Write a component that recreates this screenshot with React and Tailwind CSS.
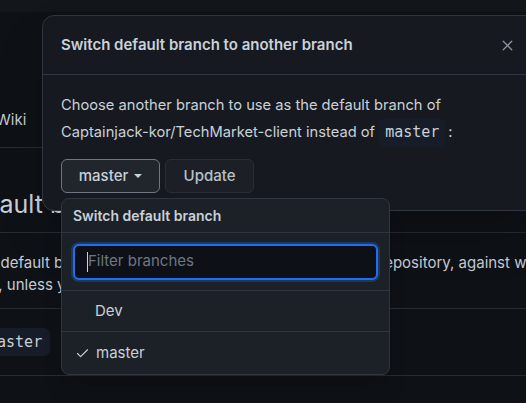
import { X, Check } from 'lucide-react';

const font = { fontFamily: 'Inter, "Noto Sans", sans-serif' };
const mono = { fontFamily: '"DejaVu Sans Mono", monospace' };

export default function App() {
  return (
    <div
      className="relative w-[526px] h-[403px] overflow-hidden bg-[#0e1116] text-[#c9d1d9] text-[15px]"
      style={font}
    >
      {/* Background page (dimmed) */}
      <div className="h-[12px] bg-[#13161b]" />
      <div className="h-[135px] flex items-end pb-[16px]">
        <span className="-ml-[4px] text-[#c5cbd2]">Wiki</span>
      </div>
      <div className="border-t border-[#262b32] w-[60px]" />
      <div className="h-[84px] flex items-center pt-[30px]">
        <span className="-ml-[42px] text-[25px] text-[#c9d1d9] whitespace-nowrap">Default branch</span>
      </div>
      <div className="border-t border-[#262b32]" />
      <div className="pt-[19px] pb-[12px] leading-[22px] whitespace-nowrap text-[#c5cbd2]">
        <p className="-ml-[31px]">
          The default branch is considered the base branch in your repository, against which all pull requests
        </p>
        <p className="-ml-[301px]">and code commits are automatically made, unless you specify a different branch.</p>
      </div>
      <div className="border-t border-[#262b32]" />
      <div className="h-[66px] flex items-center">
        <code className="-ml-[20px] px-[8px] py-[3px] rounded-md bg-[#161d28] text-[15px] text-[#c9d1d9]" style={mono}>
          master
        </code>
      </div>
      <div className="border-t border-[#262b32]" />

      {/* Dialog */}
      <div className="absolute left-[42px] top-[15px] w-[500px] h-[196px] rounded-xl border border-[#30363d] bg-[#161a20] shadow-2xl">
        <div className="h-[59px] flex items-center justify-between pl-[18px] pr-[25px] border-b border-[#30363d]">
          <h2 className="font-semibold text-[15px] text-[#c9d1d9]">Switch default branch to another branch</h2>
          <X className="w-[17px] h-[17px] text-[#8b949e]" strokeWidth={1.75} />
        </div>
        <div className="px-[18px] pt-[17px]">
          <p className="leading-[26px] text-[14.7px]">
            Choose another branch to use as the default branch of
            <br />
            Captainjack-kor/TechMarket-client instead of{' '}
            <code className="inline-block px-[6px] leading-[29px] rounded-md bg-[#161d28] text-[15px]" style={mono}>
              master
            </code>
            <span className="ml-[3px]">:</span>
          </p>
          <div className="mt-[12px] flex gap-[5px]">
            <button className="h-[34px] w-[99px] flex items-center justify-center gap-[6px] rounded-md border border-[#6e7681] bg-[#21262d] font-medium text-[#c9d1d9]">
              master
              <span className="w-0 h-0 border-x-[4px] border-x-transparent border-t-[4px] border-t-[#c9d1d9]" />
            </button>
            <button className="h-[34px] w-[89px] rounded-md border border-[#2a2f36] bg-[#1c2026] font-medium text-[#b9c0c8]">
              Update
            </button>
          </div>
        </div>
      </div>

      {/* Dropdown menu */}
      <div className="absolute left-[61px] top-[198px] w-[329px] h-[177px] rounded-lg border border-[#30363d] bg-[#1c2027] shadow-xl flex flex-col">
        <div className="h-[34px] flex items-center px-[11px] border-b border-[#30363d] font-semibold text-[14px]">
          Switch default branch
        </div>
        <div className="h-[58px] px-[11px] flex items-center border-b border-[#30363d]">
          <div className="w-full h-[36px] rounded-md border-2 border-[#1f6feb] bg-[#0d1117] shadow-[0_0_0_2px_rgba(31,111,235,0.3)] flex items-center px-[12px]">
            <span className="w-px h-[20px] bg-[#c9d1d9]" />
            <span className="text-[#6e7681]">Filter branches</span>
          </div>
        </div>
        <div className="h-[41px] flex items-center pl-[33px] border-b border-[#30363d]">Dev</div>
        <div className="flex-1 flex items-center pl-[13px] gap-[6px]">
          <Check className="w-[15px] h-[15px] text-[#c9d1d9]" strokeWidth={1.75} />
          master
        </div>
      </div>
    </div>
  );
}
